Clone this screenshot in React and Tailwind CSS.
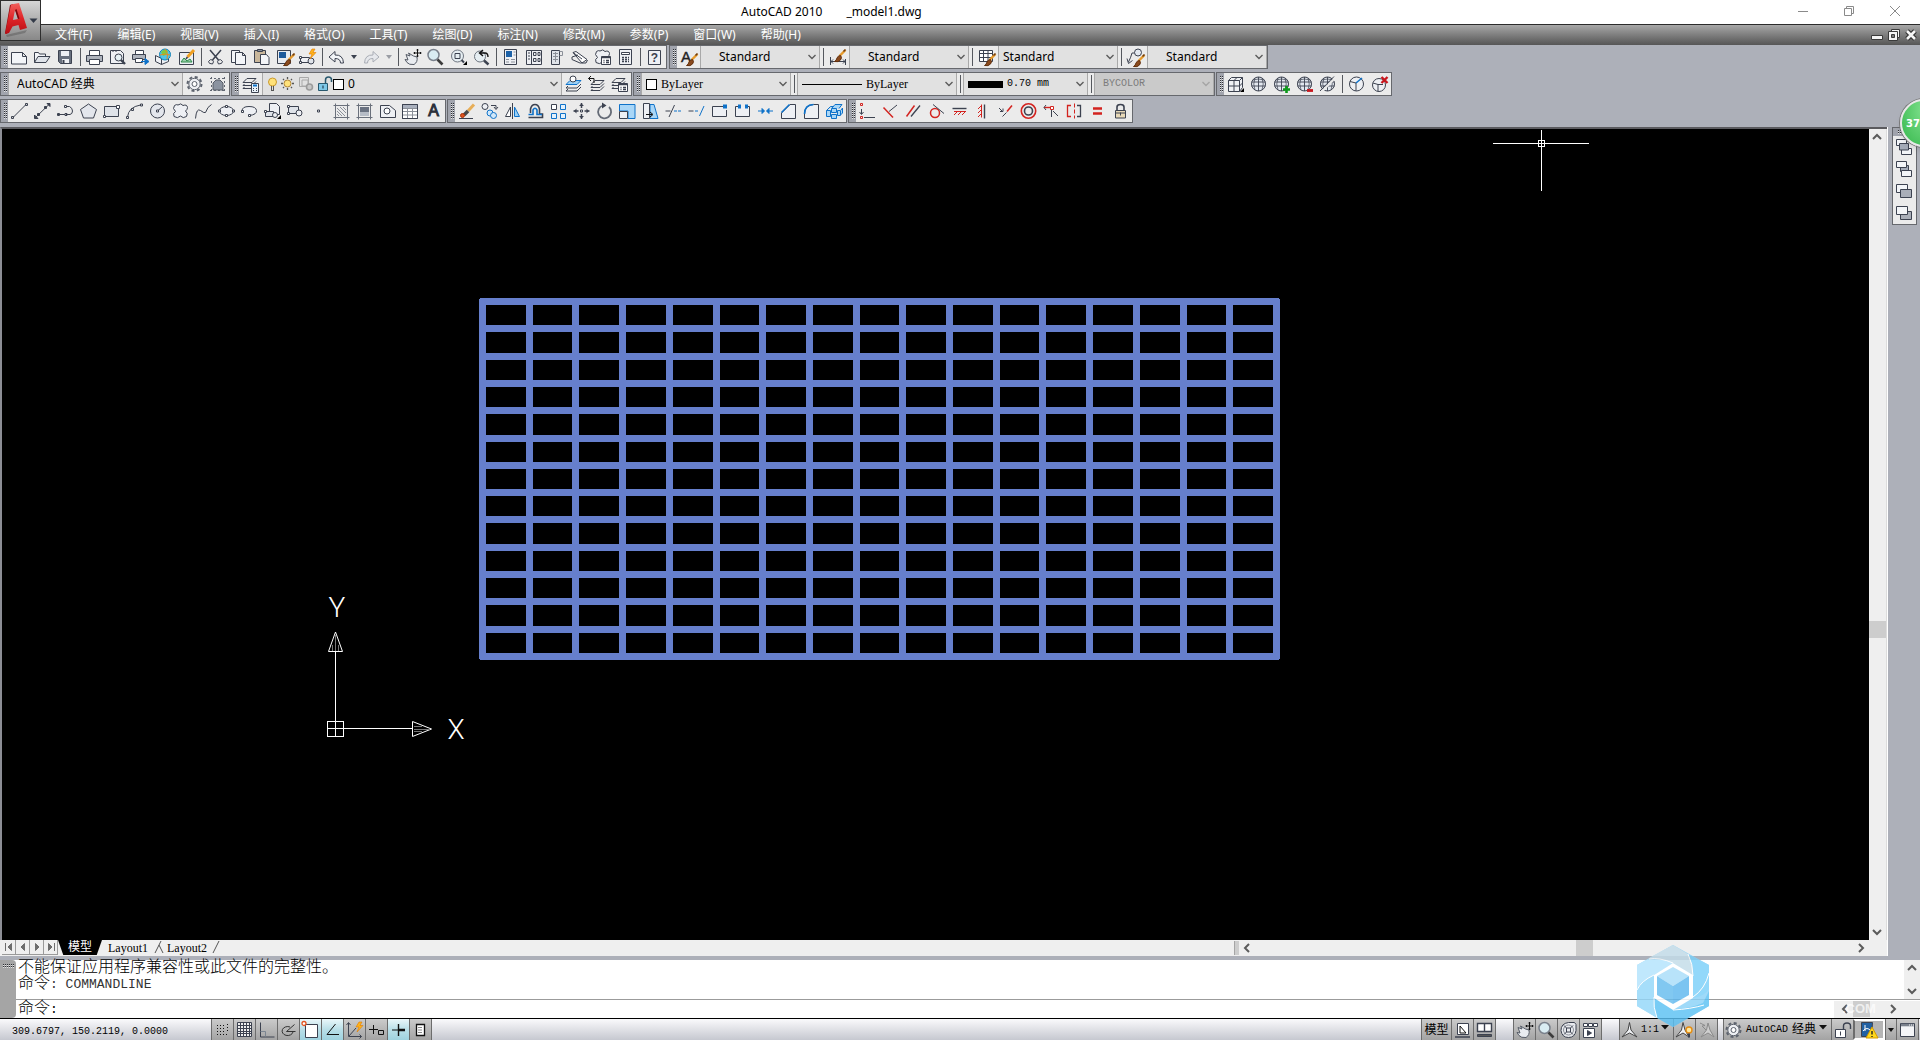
import React from "react";

const K = "#3c4250";
const B = "#0f72c9";
const R = "#d3231f";
const G = "#8b9099";

const globe = (
  <>
    <circle cx="9.500" cy="9" r="7" fill="#e3e8ef" />
    <path d="M2.500 7h14M2.500 11h14M9.500 2v14" strokeWidth=".9" />
    <path d="M6 3q-2.500 6 0 12M13 3q2.500 6 0 12M4 5q5.500-2 11 0" strokeWidth=".7" />
  </>
);
const sheets = (
  <path d="M2 7.500l4-4h9l-4 4zM2 10.500l1.500-1.500M15 6.500l-4 4H2M15 9.500l-4 4H2l1.500-1.500" fill="none" />
);
const brush = (
  <>
    <path d="M17.500 4l-6 6" stroke="#e69a2c" strokeWidth="2.400" />
    <path d="M17.500 3.500l-2 2" stroke="#6b3a14" strokeWidth="1.500" />
    <path d="M12.500 9.500q2 2 0 4.500q-2 2.500-6 1.500q2-1 2.500-3.500q1-2.500 3.500-2.500z" fill="#8a4a1e" stroke="#63300d" />
  </>
);
const corner = <path d="M18 13v4h-4z" fill="#000" stroke="none" />;
const hand = (
  <path d="M3 6.500l4 1.500-1.500-3 5 3 3.500 1q1 5-3 7.500-5 .5-7-2l-2-3 3 .5z" fill="#e9ecf0" stroke="#555b66" />
);
const moveCross = (
  <path d="M14.500 1v8M10.500 5h8M13.500 2h2M13.500 8h2M11.500 4v2M17.500 4v2" stroke="#111" />
);
const lens = (
  <>
    <circle cx="7.500" cy="7" r="5.500" fill="#d9ecf2" stroke="#7a818c" strokeWidth="1.500" />
    <path d="M11.500 11.500l5 5" stroke="#3c3c3c" strokeWidth="2.600" />
  </>
);
const cloud = (
  <path d="M7 3q3-2.500 5 .5q4-1.500 4.500 2q0 2-2 3.500q3 2.500 1 5.500q-3.500 2.500-6-.5q-3 3-6.500 .5q-1.500-3.500 1.500-5q-3.500-3-1-6q2-1.500 3.500-.5z" fill="#eef0f4" />
);
const bolt = <path d="M14 1l-3 5h3l-2 5 6-6.500h-3l2-3.500z" fill="#ffb31a" stroke="#e07b00" strokeWidth=".6" />;
const page = <path d="M3.500 1.500h12v15h-12z" fill="#eef0f4" />;

const art = {
  new: <path d="M1.500 4.500h11l4 4v7.500h-15zM12.500 4.500v4h4" fill="#f3f5f8" />,
  open: (
    <>
      <path d="M1.500 14.500v-10h4l1 1.500h6v3" fill="#f3f5f8" />
      <path d="M1.500 14.500l3.500-6h12l-4 6z" fill="#dfe3e9" />
    </>
  ),
  save: (
    <>
      <path d="M2.500 2.500h13v13h-11l-2-2z" fill="#68707e" />
      <path d="M5 3h8v5H5zM6 11h7v4H6z" fill="#eef0f4" stroke="none" />
      <path d="M7.500 12v3" stroke={K} strokeWidth="2" />
    </>
  ),
  print: (
    <>
      <path d="M4.500 7V2.500h10V7" fill="#fff" />
      <path d="M1.500 7.500h16v6h-16z" fill="#aeb3bc" />
      <path d="M4.500 11.500h10v5h-10z" fill="#fff" />
    </>
  ),
  preview: (
    <>
      <path d="M2.500 2.500h10l3 3v10h-13zM5 2v2M8 2v2" fill="#eef0f4" />
      <circle cx="10.500" cy="9.500" r="3.500" fill="#e6f1f5" />
      <path d="M13 12l4 4" strokeWidth="2.400" />
    </>
  ),
  publish: (
    <>
      <path d="M4.500 6V2.500h8V6" fill="#fff" />
      <path d="M1.500 6.500h13v5h-13z" fill="#aeb3bc" />
      <path d="M4.500 10.500h7v4h-7z" fill="#fff" />
      <path d="M10 13.500h4M14 10.500l4 3-4 3z" fill={B} stroke={B} />
    </>
  ),
  dwf: (
    <>
      <path d="M1.500 7.500l6 3v6l-6-3zM7.500 10.500l7-3v6l-7 3" fill="#eef0f4" />
      <circle cx="11" cy="6.500" r="5.500" fill="#4fc3e8" stroke="#1583b8" />
      <path d="M7 4q3-4 7-1l-2 4-3 1z" fill="#7cc943" stroke="none" />
      <path d="M11 1q4 4 2 10M6 7q5-2 10 0" stroke="#e68a1c" />
    </>
  ),
  markup: (
    <>
      <path d="M2.500 4.500h14v12h-14z" fill="#eef0f4" />
      <path d="M4 14l3-4 3 3 3-2 2 3z" fill="#9fd0ae" stroke="#2c8c4a" />
      <path d="M17 2l-6.500 7" stroke="#f0a022" strokeWidth="3" />
      <path d="M10.500 9l-1.500 2" stroke={K} strokeWidth="1.500" />
    </>
  ),
  cut: (
    <>
      <path d="M4 2l8.500 10M15 2L6.500 12" strokeWidth="1.500" />
      <path d="M2.500 13.500q2-3 4-1.500t0 4q-4 0-4-2.500zM16.500 13.500q-2-3-4-1.500t0 4q4 0 4-2.500z" />
    </>
  ),
  copyclip: (
    <>
      <path d="M2.500 2.500h8v12h-8z" fill="#f3f5f8" />
      <path d="M6.500 4.500h7l3 3v9h-10zM13.500 4.500v3h3" fill="#f3f5f8" />
    </>
  ),
  paste: (
    <>
      <path d="M2.500 2.500h11v12h-11z" fill="#c9b79b" />
      <path d="M5.500 1.500h5v2h-5z" fill="#8b9099" />
      <path d="M8.500 6.500h6l2.500 3v7h-8.500z" fill="#f3f5f8" />
    </>
  ),
  match: (
    <>
      <path d="M2.500 2.500h13v13h-13z" fill="#e8ebf0" />
      <path d="M4 4h7v6H4z" fill="#1d5a9c" stroke="none" />
      <g transform="translate(2 2)">{brush}</g>
    </>
  ),
  blockedit: (
    <>
      <path d="M2.500 9.500h9v5h-9z" fill="#eef0f4" />
      <circle cx="13" cy="13" r="3" fill="#dfe3e9" />
      <path d="M1.500 8.500h2v2h-2zM1.500 13.500h2v2h-2z" fill="#fff" />
      {bolt}
    </>
  ),
  undo: <path d="M2 9l6-5.500v3.500q8-.5 8.500 8h-3q0-4.500-5.500-4.500v3.500z" fill="#f3f5f8" />,
  redo: <path d="M17 9l-6-5.500v3.500q-8-.5-8.500 8h3q0-4.500 5.500-4.500v3.500z" fill="#e6e8ec" stroke="#a9adb5" />,
  pan: <>{hand}{moveCross}</>,
  zoomrt: lens,
  zoomwin: (
    <>
      <circle cx="8.500" cy="8" r="6" fill="#e6eef2" stroke="#6d747f" />
      <path d="M6 5.500h5v5H6z" />
      <path d="M12.500 12l2.500 2.500" strokeWidth="2" />
      {corner}
    </>
  ),
  zoomprev: (
    <>
      <circle cx="8" cy="8.500" r="5.500" fill="#e6eef2" stroke="#6d747f" />
      <path d="M12 12.500l4.500 4" strokeWidth="2.400" />
      <path d="M8 5h5q3 0 3 4M11 2L7.500 5l3.500 3" stroke="#111" strokeWidth="1.400" />
    </>
  ),
  props: (
    <>
      {page}
      <path d="M5 3h6v6H5z" fill="#1d62a8" stroke="none" />
      <path d="M12.500 4h2M12.500 7h2M5 11.500h3M10 11.500h4M5 14h3M10 14h4" stroke={G} />
    </>
  ),
  dcenter: (
    <>
      <path d="M2.500 2.500h15v14h-15zM7.500 2.500v14" fill="#eef0f4" />
      <path d="M9.500 4.500h2.500v3H9.500zM14 4.500h2v3h-2zM9.500 10.500h2.500v3H9.500zM14 10.500h2v3h-2zM4 5h2M4 8h2M4 11h2" />
    </>
  ),
  palettes: (
    <>
      <path d="M4.500 2.500h8v14h-8z" fill="#dfe3e9" />
      <path d="M12.500 3.500h3v4h-3M6 5.500h5M6 8.500h5M6 11.500h5M8.500 4v10" stroke={G} />
    </>
  ),
  sheetset: (
    <>
      <path d="M3 4.500l3-1 11 8-5 3.500z" fill="#fff" />
      <path d="M3 4.500l9 6.500M2 9l6-2M2 11.500l8 3.500h6l1.500-3M2 9v2.500" />
    </>
  ),
  markupset: (
    <>
      {cloud}
      <path d="M8.500 8.500h9v8h-9z" fill="#fff" />
      <path d="M8.500 9.500h9M10.500 12.500h1M13 12.500h3M10.500 14.500h1M13 14.500h3" strokeWidth="1.300" />
    </>
  ),
  calc: (
    <>
      {page}
      <path d="M5.500 4.500h8v2h-8z" fill="#fff" />
      <path d="M6 9.500h7M6 11.500h7M6 13.500h7" strokeDasharray="2 1" strokeWidth="1.300" />
    </>
  ),
  help: (
    <>
      <path d="M3.500 2.500h12v14h-12z" fill="#eef0f4" />
      <text x="9.500" y="14" textAnchor="middle" fontSize="12" fontWeight="700" fontFamily="Liberation Sans, sans-serif" fill={K} stroke="none">?</text>
    </>
  ),
  textstyle: (
    <>
      <text x="7" y="14" textAnchor="middle" fontSize="15" fontFamily="Liberation Sans, sans-serif" fill="#222" stroke="#222" strokeWidth=".4">A</text>
      <g transform="translate(1 2)">{brush}</g>
    </>
  ),
  dimstyle: (
    <>
      <path d="M2.500 9v8M17.500 11v6M3 13.500h14M5 11.500l-2 2 2 2M15 11.500l2 2-2 2" />
      <g transform="translate(0 -2)">{brush}</g>
    </>
  ),
  tablestyle: (
    <>
      <path d="M2.500 2.500h13v11h-13zM2.500 5.500h13M2.500 9.500h13M6.500 2.500v11M11 2.500v11" fill="#fff" />
      <g transform="translate(1 2)">{brush}</g>
    </>
  ),
  leaderstyle: (
    <>
      <circle cx="12" cy="4.500" r="3.500" fill="#e3e8ef" />
      <path d="M8.500 5H6q-1 4-3.500 9M1 10.500l1.500 5 4-3" />
      <g transform="translate(1 3)">{brush}</g>
    </>
  ),
  gear: (
    <>
      <circle cx="9.500" cy="9" r="7" strokeWidth="2" strokeDasharray="3 2.500" stroke="#5d636e" />
      <circle cx="9.500" cy="9" r="5.700" fill="#eef0f4" stroke="#5d636e" />
      <circle cx="9.500" cy="9" r="2.500" fill="#fff" stroke="#5d636e" />
    </>
  ),
  wssave: (
    <>
      <path d="M5 8l3-3h4l3 3v7H5z" fill="#8b93a0" stroke="#565c67" />
      <path d="M2 3.500h15M3.500 2v15M16.500 2v15M2 15.500h15" strokeDasharray="2 2" stroke="#5f6570" />
    </>
  ),
  layers: (
    <>
      {sheets}
      <path d="M10.500 8.500h7v9h-7z" fill="#eaf3fb" />
      <path d="M12 10.500h4" stroke={B} strokeWidth="2" />
      <path d="M12 13.500h1M15 13.500h1M12 15.500h1M15 15.500h1" />
    </>
  ),
  laycur: (
    <>
      <path d="M2 9.500l4-4h11l-4 4z" fill="#9bd0f5" stroke={B} />
      <circle cx="9" cy="4" r="3" fill="#fff" />
      <path d="M17 9l-4 4H2l2-2M17 12l-4 4H2l2-2" />
    </>
  ),
  layprev: (
    <>
      <g transform="translate(2 2)">{sheets}</g>
      <path d="M7 8V3.500H1.500M4 1L1.500 3.500 4 6" stroke="#111" />
    </>
  ),
  laystate: (
    <>
      {sheets}
      <path d="M8.500 8.500h9v8h-9z" fill="#fff" />
      <path d="M8.500 9.500h9M10.500 12.500h1M13 12.500h3M10.500 14.500h1M13 14.500h3" strokeWidth="1.300" />
    </>
  ),
  vsbox: (
    <>
      <path d="M2.500 5.500h11v11h-11zM2.500 11h11M8 5.500v11M2.500 5.500l3-3h11v10l-3 4M13.500 5.500l3-3M13.500 11l3-3M8 5.500l3-3" fill="#eef0f4" />
      {corner}
    </>
  ),
  globe,
  globeadd: <>{globe}<path d="M14.500 11v7M11 14.500h7" stroke="#0e9a1c" strokeWidth="2.600" /></>,
  globedel: <>{globe}<path d="M12 15.500h6" stroke="#c8171e" strokeWidth="2.800" /></>,
  globecut: <>{globe}<path d="M3.500 17L17.500 2.500" stroke="#ebebeb" strokeWidth="2" /><path d="M2 16L16 1.500" /></>,
  orb: (
    <>
      <circle cx="9.500" cy="9" r="7" fill="#eef0f4" />
      <path d="M3 6.500l6 1.500v8" />
      <path d="M9 8l6-5" stroke={B} strokeWidth="1.600" />
    </>
  ),
  orbx: (
    <>
      <circle cx="9" cy="10" r="6.500" fill="#eef0f4" />
      <path d="M3 8l5 1.500v7M8 9.500l5 0" />
      <path d="M11.500 2l6 6M17.500 2l-6 6" stroke="#c8171e" strokeWidth="2.400" />
    </>
  ),
  line: <path d="M3 15.500L16 2.500M1.500 14.500h2v2h-2zM15.500 1.500h2v2h-2z" fill="#fff" />,
  xline: <path d="M2 16L17 1.500M1.500 13v3.500h3.500zM14 1.500h3v3zM4.500 11.500h2v2h-2zM11.500 4.500h2v2h-2z" fill={K} />,
  pline: (
    <path d="M2 12.500h7M10 12.500h4q2.500-.5 2.500-3.500t-3-4.500h-3M1.500 11.500h2v2h-2zM9 11.500h2v2H9zM8.500 3.500h2v2h-2z" fill="none" />
  ),
  polygon: <path d="M9.500 2l8 5.500-3 8.500h-10l-3-8.500z" fill="#e3e6ec" />,
  rect: (
    <>
      <path d="M2.500 4.500h14v10h-14z" fill="#dfe3e9" />
      <path d="M14.500 3.500h3v3h-3zM1.500 13.500h2v2h-2z" fill="#fff" />
    </>
  ),
  arc: <path d="M2.500 15q1-10 13-12M1.500 14.500h2v2h-2zM6.500 6.500h2v2h-2zM15.500 2h2v2h-2z" fill="none" />,
  circle: (
    <>
      <circle cx="9.500" cy="9" r="7" fill="#e3e6ec" />
      <path d="M10 8.500L14 5M8.500 8h2v2h-2z" fill="#fff" />
    </>
  ),
  revcloud: cloud,
  spline: <path d="M1.500 16.500q1-11 5-8t5 2q2-6 6-8" />,
  ellipse: (
    <>
      <ellipse cx="9.500" cy="9" rx="7" ry="4.500" fill="#eef0f4" />
      <path d="M1.500 8h2v2h-2zM15.500 8h2v2h-2zM8.500 3.500h2v2h-2zM8.500 12.500h2v2h-2z" fill="#fff" />
    </>
  ),
  earc: (
    <>
      <path d="M2 9q0-4.500 7-4.500t7.500 4-7 5" fill="#eef0f4" />
      <path d="M1.500 8.500h2v2h-2zM8.500 12.500h2v2h-2z" fill="#fff" />
    </>
  ),
  insert: (
    <>
      <path d="M6.500 1.500h7l3 3v8h-10z" fill="#eef0f4" />
      <path d="M2.500 9.500h8v5h-8z" fill="#dfe3e9" />
      <circle cx="12" cy="13" r="2.500" fill="#eef0f4" />
      <path d="M1.500 8.500h2v2h-2z" fill="#fff" />
      {corner}
    </>
  ),
  mkblock: (
    <>
      <path d="M2.500 4.500h10v7h-10z" fill="#dfe3e9" />
      <circle cx="13" cy="11" r="3" fill="#eef0f4" />
      <path d="M1.500 3.500h2v2h-2zM1.500 10.500h2v2h-2z" fill="#fff" />
    </>
  ),
  point: <path d="M8.500 8h2v2h-2z" fill="#fff" />,
  hatch: (
    <>
      <path d="M1.500 3.500h16M3.500 1.500v16M15.500 1.500v16M1.500 15.500h16" stroke="#6a707b" />
      <path d="M5 6l8 8M8 5l6 6M5 9l5 5M11 5l3 3M5 12l2 2" stroke={G} />
    </>
  ),
  gradient: (
    <>
      <path d="M5 5h9v9H5z" fill="#6a7281" stroke="none" />
      <path d="M5 10h9v4H5z" fill="#b6bcc6" stroke="none" />
      <path d="M1.500 3.500h16M3.500 1.500v16M15.500 1.500v16M1.500 15.500h16" stroke="#6a707b" />
    </>
  ),
  region: (
    <>
      <path d="M2.500 3.500h9l6 5v7h-15z" fill="#eef0f4" />
      <circle cx="9" cy="9" r="3" fill="#fff" />
    </>
  ),
  table: (
    <>
      <path d="M1.500 2.500h15v14h-15z" fill="#fff" />
      <path d="M2 3h14v3H2z" fill="#a9b0bd" stroke="none" />
      <path d="M1.500 6.500h15M1.500 9.500h15M1.500 13h15M6.500 6v10M11.500 6v10" stroke={G} />
      <path d="M1.500 2.500h15v14h-15z" />
    </>
  ),
  mtext: (
    <text x="9.500" y="14" textAnchor="middle" fontSize="16" fontFamily="Liberation Sans, sans-serif" fill="#2b303b" stroke="#2b303b" strokeWidth="1">A</text>
  ),
  erase: (
    <>
      <path d="M17 2.500l-6 6.500" stroke="#e7ae58" strokeWidth="3" />
      <path d="M11 9l-4 4" stroke="#4a4a4a" strokeWidth="3.500" />
      <circle cx="5.500" cy="13.500" r="2" fill="#e0531d" stroke="#a8330a" />
      <path d="M2 16.500h14" />
    </>
  ),
  copy: (
    <>
      <circle cx="5" cy="4.500" r="3" fill="#eef0f4" />
      <circle cx="10" cy="11" r="3" fill="#d2e8f9" stroke={B} />
      <circle cx="13.500" cy="13.500" r="3" fill="#d2e8f9" stroke={B} />
      <path d="M11 3.500h5v3M14 5l2 2.500L18 5" />
    </>
  ),
  mirror: (
    <>
      <path d="M7.500 5v9.500h-5z" fill="#fff" />
      <path d="M9.500 1v16" />
      <path d="M11.500 5v9.500h5z" fill="#9bd0f5" stroke={B} />
    </>
  ),
  offset: (
    <>
      <path d="M2.500 15.500h14v-3.500h-3V7q-1-4.500-4.500-4.500T4.500 7v4" stroke={K} strokeWidth="1.600" />
      <path d="M2.500 12.500H7V8q2-3.500 4 0v4.500h5" stroke={B} strokeWidth="1.600" />
    </>
  ),
  array: (
    <>
      <path d="M2.500 2.500h5v5h-5z" fill="#fff" />
      <path d="M11.500 2.500h5v5h-5zM2.500 11.500h5v5h-5zM11.500 11.500h5v5h-5z" fill="#e3f1fc" stroke={B} />
    </>
  ),
  move: (
    <>
      <path d="M9.500 1v5M9.500 12v5M1.500 9h5M12.500 9h5" strokeWidth="1.500" />
      <path d="M7 4l2.500-2.500L12 4zM7 14l2.500 2.500L12 14zM4.500 6.500L2 9l2.500 2.500zM14.500 6.500L17 9l-2.500 2.500z" fill={K} stroke="none" />
      <path d="M8.500 8h2v2h-2z" fill="#fff" />
    </>
  ),
  rotate: (
    <>
      <path d="M8 3.500a6.500 6.500 0 1 0 6 1.500" strokeWidth="1.800" stroke="#656b76" />
      <path d="M7 .5l4.500 3L7 6.500z" fill={K} stroke="none" />
    </>
  ),
  scale: (
    <>
      <path d="M1.500 2.500h15.500v14H10V9H1.500z" fill="#a9d6f7" stroke={B} />
      <path d="M1.500 9.500h8v7h-8z" fill="#eef0f4" />
    </>
  ),
  stretch: (
    <>
      <path d="M9 2.500h4l4 14H9z" fill="#a9d6f7" stroke={B} />
      <path d="M2.500 1.500h6v15h-6z" fill="#eef0f4" />
      <path d="M5 12.500h6M9 10l3 2.500L9 15" stroke="#111" />
    </>
  ),
  trim: (
    <>
      <path d="M1.500 9h5M5 15L10.500 3" />
      <path d="M10 9h8" stroke={B} strokeDasharray="3 1" />
    </>
  ),
  extend: (
    <>
      <path d="M1.500 9h5" />
      <path d="M8 9h4" stroke={B} strokeDasharray="3 1" />
      <path d="M12.500 14L17 4" stroke={B} />
    </>
  ),
  breakpt: (
    <>
      <path d="M14 4.500H2.500v10h14V8" fill="#eef0f4" />
      <path d="M13 2.500h4v4h-4z" fill={B} stroke="none" />
    </>
  ),
  break: (
    <>
      <path d="M5 4.500H2.500v10h14v-10H14" fill="#eef0f4" />
      <path d="M5 2.500h3v4H5zM12 2.500h3v4h-3z" fill={B} stroke="none" />
    </>
  ),
  join: <path d="M2 9h6M17 9h-6M6 6.500L8.500 9 6 11.500zM13 6.500L10.500 9l2.500 2.500z" stroke={B} fill={B} />,
  chamfer: (
    <>
      <path d="M2.500 16.500V11L11 2.500h5.500v14z" fill="#eef0f4" />
      <path d="M2.500 10.500l8-8" stroke={B} strokeWidth="1.600" />
    </>
  ),
  fillet: (
    <>
      <path d="M2.500 16.500V12q0-9 9-9.500h5v14z" fill="#eef0f4" />
      <path d="M2.500 12q0-9 9-9.500" stroke={B} strokeWidth="1.600" />
    </>
  ),
  explode: (
    <path d="M1.500 8.500h4v6h-4zM6.500 6.500h5v4h-5zM6.500 12.500h5v4h-5zM12.500 8.500h3v5h-3zM1.500 8.500l4-4h3M7 6l3-3.500h7l-3 4M16 8l1.500-2v5l-2 2" fill="#a9d6f7" stroke={B} />
  ),
  coincident: (
    <>
      <path d="M3.500 7v5M1.500 10l2 2.500 2-2.500M6 15.500h11" />
      <path d="M2.500 1.500h2v2h-2zM2.500 14.500h2v2h-2z" stroke={R} />
    </>
  ),
  perp: (
    <>
      <path d="M8 9.500L16 3" />
      <path d="M2.500 5.500L12 15.500" stroke={R} strokeWidth="1.500" />
    </>
  ),
  parallel: (
    <>
      <path d="M2.500 14.500l8-11" stroke={R} strokeWidth="1.500" />
      <path d="M7 14.500l9-11" strokeWidth="1.300" />
    </>
  ),
  tangent: (
    <>
      <circle cx="8" cy="11" r="4.500" stroke={R} strokeWidth="1.500" />
      <path d="M6 2.500l11 9" />
    </>
  ),
  horiz: (
    <>
      <path d="M2.500 6.500h14" strokeWidth="1.400" />
      <path d="M4 9.500h12M7 10l-3 3M11 10l-3 3M15 10l-3 3" stroke={R} />
    </>
  ),
  vert: (
    <>
      <path d="M11.500 2.500v14" strokeWidth="1.400" />
      <path d="M8.500 2.500v13M8 4l-3 3M8 8l-3 3M8 12l-3 3" stroke={R} />
    </>
  ),
  collinear: (
    <>
      <path d="M3 6l4 4M4 9.500h3v-3M6.500 14.500l4-4" />
      <path d="M11 9.500l5-6" stroke={R} strokeWidth="1.500" />
    </>
  ),
  concentric: (
    <>
      <circle cx="9.500" cy="9" r="7.200" stroke={R} strokeWidth="1.600" />
      <circle cx="9.500" cy="9" r="4" strokeWidth="1.600" />
    </>
  ),
  smooth: (
    <>
      <path d="M2 5.500h6" stroke={R} strokeWidth="1.400" />
      <path d="M9.500 7v8M11 9l5 5M4 3l-2 2.500 2 2.500" />
      <path d="M8.500 4.500h3v3h-3z" stroke={R} fill="#fff" />
    </>
  ),
  symmetric: (
    <>
      <path d="M6 3.500H2.500v11H6" stroke={R} strokeWidth="1.300" />
      <path d="M9.500 1.500v15" stroke={R} strokeDasharray="4 2" />
      <path d="M12 3.500h3.500v11H12" strokeWidth="1.300" />
    </>
  ),
  equal: <path d="M5 6.500h9M5 11.500h9" stroke={R} strokeWidth="2.600" />,
  lock: (
    <>
      <path d="M6 8V5q0-2.500 3.500-2.500T13 5v3" strokeWidth="1.600" />
      <path d="M4.500 8.500h10v7.500h-10z" fill="#e8d9b8" />
      <path d="M5 11h9M9.500 10.500v3" />
    </>
  ),
  order1: <><path d="M1.500 1.500h10v6h-10zM6.500 10.500h10v6h-10z" fill="#f3f5f8" /><path d="M4.500 5.500h9v6.500h-9z" fill="#a4abb8" /></>,
  order2: <><path d="M5.500 5.500h8v6h-8z" fill="#a4abb8" /><path d="M1.500 1.500h10v6h-10zM6.500 10.500h10v6h-10z" fill="#f3f5f8" /></>,
  order3: <><path d="M1.500 2.500h11v8h-11z" fill="#f3f5f8" /><path d="M5.500 7.500h11v8h-11z" fill="#a9aeb8" /></>,
  order4: <><path d="M5.500 7.500h11v8h-11z" fill="#a9aeb8" /><path d="M1.500 2.500h11v8h-11z" fill="#f3f5f8" /></>,
  snap: <path d="M4 4.500h8M4 7.500h8M4 10.500h8M4 13.500h11M14.500 3v8" strokeDasharray="1 2" stroke="#111" />,
  grid: <path d="M2.500 1.500h14v14h-14zM2.500 4.500h14M2.500 7.500h14M2.500 10.500h14M2.500 12.500h14M5.500 1.500v14M8.500 1.500v14M11.500 1.500v14M14.500 1.500v14" fill="#eee" />,
  ortho: <><path d="M3.500 1.500v14.500h14" /><path d="M3.500 10.500h5v5" stroke="#7b8591" /></>,
  polar: <path d="M14 11a5.500 4.500 0 1 1-3-5M15.500 3.500L7.500 10.500h9" stroke="#333" />,
  osnap: <><path d="M4.500 3.500h12v13h-12z" fill="#fff" /><circle cx="3" cy="2.500" r="2" fill="#fff" stroke="#e35420" strokeWidth="1.300" /></>,
  otrack: <path d="M12.500 3L4 13.500h12" stroke="#111" />,
  ducs: <><path d="M3.500 2v13.500h13M1.500 4l2-2.500 2 2.500M14.500 13.500l2 2-2 2M4 15l7-8" />{bolt}</>,
  dyn: <path d="M6.500 4v9M2 8.500h9M11.500 9.500h5v4h-5z" stroke="#111" />,
  lwt: <><path d="M9.500 3v12" stroke="#111" strokeWidth="1.400" /><path d="M3 9h6" stroke="#111" /><path d="M9 9h7" stroke="#111" strokeWidth="2.500" /></>,
  qp: <><path d="M5.500 3.500h8v11h-8z" fill="#fff" stroke="#111" strokeWidth="1.300" /><path d="M7.500 6.500h4M7.500 9h4M7.500 11.500h4" stroke="#111" strokeDasharray="1 1" /></>,
  layoutA: <><path d="M4.500 2.500h11v11h-11z" fill="#fff" /><path d="M7 5v7h6z" stroke="#111" /><path d="M2 16h15" strokeWidth="1.500" /></>,
  layoutB: <><path d="M2.500 2.500h14v8h-14zM9.500 2.500v8" fill="#fff" strokeWidth="1.400" /><path d="M2.500 13.500h14v2h-14z" fill="#555" /></>,
  steer: (
    <>
      <path d="M9.500 1.500h6l1.500 2v6q-1 7-7.500 7t-7.500-7q0-7 7.500-8z" fill="#e8eaee" />
      <circle cx="9.500" cy="9" r="5" stroke={G} />
      <path d="M7.500 7h4v4h-4zM5 4.500l2.500 2.500M14 4.500L11.500 7M5 13.500L7.500 11M14 13.500L11.500 11" />
    </>
  ),
  motion: <><path d="M2.500 2.500h4v3h-4zM7.500 2.500h4v3h-4zM12.500 2.500h4v3h-4z" fill="#fff" /><path d="M2.500 7.500h11v9h-11z" fill="#fff" /><path d="M6.500 9.500v5l4-2.500z" fill={K} /></>,
  anno: <path d="M9.500 1.500L8 9l-6 7 7.500-4 7.500 4-6-7z" fill="#f0f2f5" stroke="#444" />,
  annovis: <><path d="M8 1.500L6.500 9 1 16l7-4 6 4-4-7z" fill="#f0f2f5" stroke="#444" /><circle cx="14" cy="9" r="3" fill="#ffe9a0" stroke="#e58c12" strokeWidth="1.400" /><path d="M14 12.500v4" strokeWidth="2" /></>,
  annoauto: <path d="M11 2L9.500 9 4 16l7-4 6 4-4-7zM3 2l5 2.500-3 .5 4 4" fill="#cfcfcf" stroke="#8a8a8a" />,
  unlock: <><path d="M10.500 8V5q0-3 3.500-3t3.500 3v3" strokeWidth="1.400" /><path d="M2.500 8.500h10v8h-10z" fill="#fff" /><path d="M7.500 10.500v4" /></>,
  tray: <><path d="M1.500 1.500h11l-1 14h-10z" fill="#2261a3" /><path d="M3 10q4-5 8 0M5 4v6" stroke="#fff" /><path d="M12 6l6 11H6z" fill="#ffd81c" stroke="#d59a00" /><path d="M12 10v3.500M12 15v1" stroke="#222" strokeWidth="1.400" /></>,
  clean: <><path d="M2.500 2.500h14v13h-14z" fill="#f4f5f7" /><path d="M3 4h13" strokeWidth="2.600" stroke="#7a818c" /><path d="M11 4h1M13 4h1M15 4h1" stroke="#fff" /></>,
  bulb: <><circle cx="9.500" cy="7" r="4" fill="#ffe27a" stroke="#c99a2e" /><path d="M8.500 11v4M10.500 11v4M8 15.500h3" stroke="#555" /></>,
  sun: <><circle cx="9.500" cy="8.500" r="3.500" fill="#ffe27a" stroke="#b0863a" /><path d="M9.500 2v2M9.500 13v2M3 8.500h2M14 8.500h2M5 4l1 1M13 12l1 1M14 4l-1 1M5 13l1-1" stroke="#555" strokeWidth="1.300" /></>,
  vpfreeze: <><path d="M2.500 2.500h9v9h-9zM5 5h6v6H5z" stroke="#a9a9a9" /><circle cx="12.500" cy="12" r="3" fill="#c8c8c8" stroke="#9c9c9c" strokeWidth="1.600" /></>,
  layunlock: <><path d="M10.500 8V5q0-3 3-3t3 3v2" strokeWidth="1.500" stroke="#28586e" /><path d="M3.500 8.500h9v7h-9z" fill="#7ec8e8" stroke="#28586e" /><path d="M8 10.500v3" stroke="#123" /></>,
};

const Art = ({ name }) => (
  <svg width="19" height="18" viewBox="0 0 19 18" fill="none" stroke={K} className="shrink-0 overflow-visible" aria-hidden="true">
    {art[name]}
  </svg>
);

const Btn = ({ name }) => (
  <button type="button" aria-label={name} className="flex h-[22px] w-[23px] shrink-0 items-center justify-center hover:bg-sky-100">
    <Art name={name} />
  </button>
);

const Sep = () => (
  <div className="flex w-[6px] shrink-0 justify-center py-0.5">
    <div className="w-px bg-[#55585e]" />
  </div>
);

const Grip = () => (
  <div className="flex w-[7px] shrink-0 items-center justify-center bg-[#a1a4ad]">
    <div className="h-4 w-1 bg-[conic-gradient(#2f3136_25%,#e4e4e4_0_50%,#0000_0)] bg-[size:2px_2px]" />
  </div>
);

const Bar = ({ label, children }) => (
  <div role="toolbar" aria-label={label} className="flex h-6 shrink-0 border border-[#66686d] bg-[#ebebeb]">
    <Grip />
    {children}
  </div>
);

const Items = ({ list }) =>
  list.split(" ").map((n, i) => (n === "|" ? <Sep key={i} /> : <Btn key={i} name={n} />));

const Chevron = ({ className = "text-[#5c5c5c]" }) => (
  <svg width="10" height="6" viewBox="0 0 10 6" fill="none" stroke="currentColor" strokeWidth="1.400" className={"shrink-0 " + className} aria-hidden="true">
    <path d="M1.500 1l3.500 3.500L8.500 1" />
  </svg>
);

const Caret = ({ label, className = "text-[#3c4250]" }) => (
  <button type="button" aria-label={label} className={"flex w-3 shrink-0 items-center justify-center " + className}>
    <svg width="6" height="4" viewBox="0 0 6 4" fill="currentColor" aria-hidden="true"><path d="M0 0h6L3 4z" /></svg>
  </button>
);

const UI = "font-['Noto_Sans','Noto_Sans_CJK_SC',sans-serif] text-[12px]";
const SERIF = "font-['Liberation_Serif','Noto_Sans_CJK_SC',serif] text-[12px]";
const MONO = "font-['Liberation_Mono','Noto_Sans_CJK_SC',monospace] text-[10px]";

const Combo = ({ label, value, width, pad = "pl-4", font = UI, disabled = false, lead }) => (
  <div className={"flex shrink-0 items-center border-x border-[#a9a9a9] pr-0.5 " + (disabled ? "bg-[#cacaca] " : "bg-[#e1e1e1] ") + width}>
    {lead}
    <select
      aria-label={label}
      disabled={disabled}
      className={"h-[22px] min-w-0 flex-1 appearance-none bg-transparent leading-[20px] outline-none " + font + " " + pad + (disabled ? " text-[#7c7c7c]" : " text-black")}
    >
      <option>{value}</option>
    </select>
    <Chevron className={disabled ? "text-[#a5a5a5]" : "text-[#5c5c5c]"} />
  </div>
);

const menus = ["文件(F)", "编辑(E)", "视图(V)", "插入(I)", "格式(O)", "工具(T)", "绘图(D)", "标注(N)", "修改(M)", "参数(P)", "窗口(W)", "帮助(H)"];

const WinBtn = ({ label, children }) => (
  <button type="button" aria-label={label} className="flex h-[22px] w-[46px] items-center justify-center">
    <svg width="12" height="12" viewBox="0 0 12 12" fill="none" stroke="#8a8a8a" aria-hidden="true">{children}</svg>
  </button>
);

const DocBtn = ({ label, children }) => (
  <button type="button" aria-label={label} className="flex w-[17px] items-center justify-center">
    <svg width="14" height="14" viewBox="0 0 14 14" fill="none" aria-hidden="true">{children}</svg>
  </button>
);

const Header = () => (
  <header className="relative">
    <div className="flex h-6 justify-between bg-white">
      <h1 className={"ml-[38.6%] flex items-center gap-6 whitespace-pre text-black " + UI}>
        <span>AutoCAD 2010</span>
        <span>_model1.dwg</span>
      </h1>
      <div className="flex pr-0.5">
        <WinBtn label="Minimize"><path d="M1 6.500h10" /></WinBtn>
        <WinBtn label="Restore"><path d="M1.500 3.500h7v7h-7zM3.500 3.500v-2h7v7h-2" /></WinBtn>
        <WinBtn label="Close"><path d="M1 1l10 10M11 1L1 11" /></WinBtn>
      </div>
    </div>
    <div className="flex h-[21px] justify-between border-t border-[#2b2b2b] bg-linear-to-b from-[#a8a8a8] to-[#565656]">
      <nav className={"flex gap-[25px] pl-[55px] text-white " + UI}>
        {menus.map((m) => (
          <button type="button" key={m} className="leading-5">{m}</button>
        ))}
      </nav>
      <div className="flex pr-px">
        <DocBtn label="Minimize drawing"><path d="M1.500 7.500h11v4h-11z" fill="#f4f4f4" stroke="#3a3a3a" /></DocBtn>
        <DocBtn label="Restore drawing">
          <path d="M4.500 1.500h8v8h-8z" fill="#f4f4f4" stroke="#3a3a3a" />
          <path d="M1.500 3.500h9v9h-9z" fill="#f4f4f4" stroke="#3a3a3a" />
          <path d="M4.500 6.500h3v3h-3z" fill="#777" stroke="#3a3a3a" />
        </DocBtn>
        <DocBtn label="Close drawing">
          <path d="M3 3l8 8M11 3l-8 8" stroke="#333" strokeWidth="5" />
          <path d="M3 3l8 8M11 3l-8 8" stroke="#f6f6f6" strokeWidth="2.600" />
        </DocBtn>
      </div>
    </div>
    <button type="button" aria-label="Application menu" className="absolute top-0 left-0 flex size-[41px] items-center border border-[#2e2e2e] bg-linear-to-b from-[#d6d6d6] to-[#888888]">
      <svg width="39" height="39" viewBox="0 0 39 39" aria-hidden="true">
        <defs>
          <linearGradient id="red" x1="0" y1="0" x2="0" y2="1">
            <stop offset="0" stopColor="#f2605c" />
            <stop offset=".5" stopColor="#df2428" />
            <stop offset="1" stopColor="#b80d14" />
          </linearGradient>
        </defs>
        <path d="M5 34l21-5-2 3-18 4z" fill="#5a5a5a" opacity=".5" />
        <path d="M9 4l3-1-3 20-3 10-2-1z" fill="#8e0b10" />
        <path d="M10 3.500l8-1.500L26 27l-7 2-1.500-5-6 1.500L8 32l-4 1zM14 9l-2 10 5-1z" fill="url(#red)" fillRule="evenodd" />
        <path d="M14 9l3 9 1.500-.5L15.500 8z" fill="#7d080d" />
        <path d="M28.500 17.500h8l-4 4.500z" fill="#333a48" />
      </svg>
    </button>
  </header>
);

const Toolbars = () => (
  <div className="flex flex-col gap-[3px] pb-1">
    <div className="flex gap-0.5">
      <Bar label="标准">
        <Items list="new open save | print preview publish dwf markup | cut copyclip paste match blockedit |" />
        <Btn name="undo" /><Caret label="Undo list" />
        <Btn name="redo" /><Caret label="Redo list" className="text-[#9a9da4]" />
        <Items list="| pan zoomrt zoomwin zoomprev | props dcenter palettes sheetset markupset calc | help" />
      </Bar>
      <Bar label="样式">
        <Btn name="textstyle" />
        <Combo label="文字样式" value="Standard" width="w-[120px]" pad="pl-[18px]" />
        <Sep /><Btn name="dimstyle" />
        <Combo label="标注样式" value="Standard" width="w-[120px]" pad="pl-[18px]" />
        <Sep /><Btn name="tablestyle" />
        <Combo label="表格样式" value="Standard" width="w-[120px]" pad="pl-1" />
        <Sep /><Btn name="leaderstyle" />
        <Combo label="多重引线样式" value="Standard" width="w-[120px]" pad="pl-[18px]" />
      </Bar>
    </div>
    <div className="flex gap-px">
      <Bar label="工作空间">
        <Combo label="工作空间" value="AutoCAD 经典" width="w-[175px]" pad="pl-2" />
        <Items list="gear wssave" />
      </Bar>
      <Bar label="图层">
        <Btn name="layers" />
        <Combo
          label="图层"
          value="0"
          width="w-[300px]"
          pad="pl-1"
          lead={
            <div className="flex items-center">
              <Art name="bulb" />
              <div className="-ml-1"><Art name="sun" /></div>
              <Art name="vpfreeze" />
              <div className="-ml-px"><Art name="layunlock" /></div>
              <div className="-ml-px size-[11px] border border-black bg-white" />
            </div>
          }
        />
        <Items list="laycur layprev laystate" />
      </Bar>
      <Bar label="特性">
        <Combo label="颜色" value="ByLayer" width="w-[150px]" pad="pl-1" font={SERIF} lead={<div className="ml-1 size-[11px] border border-black bg-white" />} />
        <Sep />
        <Combo label="线型" value="ByLayer" width="w-[160px]" pad="pl-1" font={SERIF} lead={<div className="ml-1 h-px w-[60px] bg-black" />} />
        <Sep />
        <Combo label="线宽" value="0.70 mm" width="w-[125px]" pad="pl-1" font={MONO} lead={<div className="ml-1 h-[7px] w-[35px] bg-black" />} />
        <Sep />
        <Combo label="打印样式" value="BYCOLOR" width="w-[120px]" pad="pl-2" font={MONO} disabled />
      </Bar>
      <Bar label="三维导航">
        <Items list="vsbox globe globeadd globedel globecut | orb orbx" />
      </Bar>
    </div>
    <div className="flex gap-px">
      <Bar label="绘图">
        <Items list="line xline pline polygon rect arc circle revcloud spline ellipse earc insert mkblock point hatch gradient region table mtext" />
      </Bar>
      <Bar label="修改">
        <Items list="erase copy mirror offset array move rotate scale stretch trim extend breakpt break join chamfer fillet explode" />
      </Bar>
      <Bar label="几何约束">
        <Items list="coincident perp parallel tangent horiz vert collinear concentric smooth symmetric equal lock" />
      </Bar>
    </div>
  </div>
);

const COLS = 17;
const ROWS = 13;
const grid = { x: 477, y: 169, w: 794, h: 355, t: 7 };

const Drawing = () => (
  <svg className="absolute inset-0 h-full w-full" fill="none" stroke="#fff" shapeRendering="crispEdges" role="img" aria-label="model space">
    <g fill="#667fcc" stroke="none">
      {Array.from({ length: COLS + 1 }, (_, i) => (
        <rect key={"c" + i} x={grid.x + Math.round((i * grid.w) / COLS)} y={grid.y + 1} width={grid.t} height={grid.h + grid.t - 2} />
      ))}
      {Array.from({ length: ROWS + 1 }, (_, i) => (
        <rect key={"r" + i} x={grid.x + 1} y={grid.y + Math.round((i * grid.h) / ROWS)} width={grid.w + grid.t - 2} height={grid.t} />
      ))}
    </g>
    <path d="M325.500 592.500h16v15h-16zM333.500 522v86M325 599.500h85" />
    <path d="M333.500 503l-7 19.500h14zM410.500 592.500v15l19-7.500z" shapeRendering="auto" />
    <path d="M333.500 506v16M330.500 516v6M336.500 516v6M412 597.500h8M412 600h16M412 602.500h8" stroke="#777" />
    <g fill="#fff" stroke="none" fontFamily="Roboto, sans-serif" fontWeight="300" fontSize="28" textAnchor="middle" shapeRendering="auto">
      <text x="335" y="488">Y</text>
      <text x="454" y="610">X</text>
    </g>
    <path d="M1491 14.500h45M1543 14.500h44M1539.500 1v10M1539.500 18v44M1536.500 11.500h6v6h-6zM1539.500 12v5M1537 14.500h5" />
  </svg>
);

const Arrow = ({ label, dir }) => {
  const d = { up: "M2 8l4-4 4 4", down: "M2 4l4 4 4-4", left: "M8 2L4 6l4 4", right: "M4 2l4 4-4 4" }[dir];
  return (
    <button type="button" aria-label={label} className="flex h-4 w-4 shrink-0 items-center justify-center">
      <svg width="12" height="12" viewBox="0 0 12 12" fill="none" stroke="#5b5b5b" strokeWidth="2" aria-hidden="true"><path d={d} /></svg>
    </button>
  );
};

const NavBtn = ({ label, d }) => (
  <button type="button" aria-label={label} className="flex h-[15px] w-[14px] items-center justify-center border-r border-b border-[#9a9a9a] bg-[#efefef]">
    <svg width="10" height="10" viewBox="0 0 10 10" fill="#6d6d6d" stroke="#6d6d6d" aria-hidden="true"><path d={d} /></svg>
  </button>
);

const Tabs = () => (
  <div className="flex h-4 bg-[#efefef] pl-0.5">
    <NavBtn label="First" d="M1.500 1v8M7.500 1.500v7L4 5z" />
    <NavBtn label="Previous" d="M6.500 1.500v7L3 5z" />
    <NavBtn label="Next" d="M3.500 1.500v7L7 5z" />
    <NavBtn label="Last" d="M2.500 1.500v7L6 5zM8.500 1v8" />
    <button type="button" className={"h-[15px] w-11 bg-black text-center leading-[15px] text-white [clip-path:polygon(0_0,100%_0,88%_100%,12%_100%)] " + SERIF}>模型</button>
    <button type="button" className={"ml-1.5 leading-[15px] text-black " + SERIF}>Layout1</button>
    <svg width="19" height="14" viewBox="0 0 19 14" stroke="#555" fill="none" aria-hidden="true"><path d="M7 13L13 1M11 5l4 8" /></svg>
    <button type="button" className={"leading-[15px] text-black " + SERIF}>Layout2</button>
    <svg width="18" height="14" viewBox="0 0 18 14" stroke="#555" fill="none" aria-hidden="true"><path d="M6 13L12 1" /></svg>
    <div className="flex-1" />
    <div className="flex w-[653px] shrink-0">
      <div className="my-px w-[5px] border-l border-[#a5a5a5] bg-[#cdcdcd]" />
      <Arrow label="Scroll left" dir="left" />
      <div className="grow-[320]" />
      <div className="w-[17px] bg-[#cdcdcd]" />
      <div className="grow-[259]" />
      <Arrow label="Scroll right" dir="right" />
      <div className="w-[18px]" />
    </div>
  </div>
);

const Body = () => (
  <div className="flex flex-1 pr-[3px]">
    <main className="mb-1 flex flex-1 flex-col border-r border-white">
      <div className="flex flex-1 border-t-2 border-l-2 border-t-[#5a5a5e] border-l-[#8c8e95]">
        <div className="relative min-h-96 flex-1 overflow-hidden bg-black">
          <Drawing />
        </div>
        <div className="flex w-[18px] flex-col border-r border-[#dcdcdc] bg-[#efefef]">
          <Arrow label="Scroll up" dir="up" />
          <div className="grow-[473]" />
          <div className="h-[17px] bg-[#cdcdcd]" />
          <div className="grow-[284]" />
          <Arrow label="Scroll down" dir="down" />
        </div>
      </div>
      <Tabs />
    </main>
    <aside role="toolbar" aria-label="绘图次序" className="ml-1 flex w-[25px] flex-col items-center self-start border border-[#66686d] bg-[#ebebeb]">
      <div className="flex h-2 w-full items-center justify-center bg-[#a1a4ad]">
        <div className="h-1 w-4 bg-[conic-gradient(#2f3136_25%,#e4e4e4_0_50%,#0000_0)] bg-[size:2px_2px]" />
      </div>
      <Items list="order1 order2 order3 order4" />
    </aside>
  </div>
);

const CommandLine = () => (
  <section aria-label="命令行" className="flex h-[58px] bg-white font-['Liberation_Mono','Noto_Sans_CJK_SC',monospace] text-[16px] text-black">
    <div className="w-4 shrink-0 rounded-r-sm bg-[#a5a5a5] pt-1">
      <div className="ml-0.5 h-1 w-3 bg-[conic-gradient(#2f3136_25%,#e4e4e4_0_50%,#0000_0)] bg-[size:2px_2px]" />
    </div>
    <div className="flex flex-1 flex-col">
      <div className="flex h-10 justify-between border-b border-[#9b9b9b]">
        <div className="pl-[2px] font-light leading-4">
          <p>不能保证应用程序兼容性或此文件的完整性。</p>
          <p>命令<span className="text-[13px] text-[#333]">: COMMANDLINE</span></p>
        </div>
        <div className="flex w-4 flex-col justify-between bg-[#efefef]">
          <Arrow label="History up" dir="up" />
          <Arrow label="History down" dir="down" />
        </div>
      </div>
      <div className="flex flex-1 items-center">
        <label htmlFor="cmd" className="pl-[2px] font-light leading-4">命令<span className="text-[13px]">:</span></label>
        <input id="cmd" className="h-4 min-w-0 flex-1 bg-transparent pl-2 text-[13px] outline-none" />
        <div className="relative flex h-[17px] w-[86px] items-center bg-[#efefef] pl-[3px]">
          <Arrow label="Command scroll left" dir="left" />
          <div className="h-4 w-[17px] bg-[#cdcdcd]" />
          <div className="w-[15px]" />
          <Arrow label="Command scroll right" dir="right" />
          <span className="absolute left-2 font-['Liberation_Sans',sans-serif] text-[13px] font-bold leading-4 text-white/70">.COM</span>
        </div>
      </div>
    </div>
  </section>
);

const SBtn = ({ name, on = false }) => (
  <button
    type="button"
    aria-label={name}
    aria-pressed={on}
    className={"flex w-[22px] shrink-0 items-center justify-center border-l border-[#6c6c6c] bg-linear-to-b " + (on ? "from-[#eaf7fa] via-[#b9dfe8] to-[#9fd2df]" : "from-[#cbcbcb] to-[#a3a3a3]")}
  >
    <Art name={name} />
  </button>
);

const SText = ({ children, width, label }) => (
  <button type="button" aria-label={label} className={"flex shrink-0 items-center border-l border-[#6c6c6c] bg-linear-to-b from-[#cbcbcb] to-[#a3a3a3] whitespace-nowrap text-black " + width}>
    {children}
  </button>
);

const Down = () => (
  <svg width="8" height="5" viewBox="0 0 8 5" className="mb-1 shrink-0" aria-hidden="true"><path d="M0 0h8L4 4.500z" fill="#111" /></svg>
);

const StatusBar = () => (
  <footer className="flex h-[22px] border-t border-black bg-linear-to-b from-[#fafafc] to-[#c6c8d0] text-black">
    <div className={"flex w-[211px] items-center pl-3 pt-1 whitespace-pre " + MONO}>309.6797, 150.2119, 0.0000</div>
    <div className="flex border-r border-[#6c6c6c]">
      <SBtn name="snap" /><SBtn name="grid" /><SBtn name="ortho" /><SBtn name="polar" />
      <SBtn name="osnap" on /><SBtn name="otrack" on /><SBtn name="ducs" /><SBtn name="dyn" />
      <SBtn name="lwt" on /><SBtn name="qp" />
    </div>
    <div className="flex-1" />
    <div className="flex border-r border-[#6c6c6c]">
      <SText width="w-[30px] justify-center"><span className={UI}>模型</span></SText>
      <SBtn name="layoutA" /><SBtn name="layoutB" />
    </div>
    <div className="w-[17px]" />
    <div className="flex border-r border-[#6c6c6c]">
      <SBtn name="pan" /><SBtn name="zoomrt" /><SBtn name="steer" /><SBtn name="motion" />
    </div>
    <div className="w-[17px]" />
    <div className="flex border-r border-[#6c6c6c]">
      <SText width="w-[54px] justify-between pr-1" label="注释比例"><Art name="anno" /><span className={MONO}>1:1</span><Down /></SText>
      <SBtn name="annovis" /><SBtn name="annoauto" />
    </div>
    <div className="w-[5px]" />
    <div className="flex border-r border-[#6c6c6c]">
      <SText width="w-[108px] justify-between pr-1" label="切换工作空间">
        <Art name="gear" />
        <span className={"flex items-center gap-1 " + MONO}>AutoCAD <span className="text-[12px]">经典</span></span>
        <Down />
      </SText>
      <SBtn name="unlock" />
      <button type="button" aria-label="tray" className="flex w-8 items-center justify-center border-2 border-white border-l-[#6c6c6c] bg-[#b5b5b5]"><Art name="tray" /></button>
      <SText width="w-[11px] justify-center" label="状态栏菜单"><svg width="6" height="4" viewBox="0 0 6 4" aria-hidden="true"><path d="M0 0h6L3 4z" fill="#111" /></svg></SText>
      <SBtn name="clean" />
    </div>
    <div className="w-px" />
  </footer>
);

const Watermark = () => (
  <svg width="72" height="82" viewBox="0 0 72 82" className="pointer-events-none absolute right-[211px] bottom-[13px]" aria-hidden="true">
    <g opacity=".82">
      <path d="M36 0L72 20V61L36 82 0 61V20z" fill="#8bd2f8" />
      <path d="M36 0L0 20v24q6-9 17-14l19-12z" fill="#b3e4fd" />
      <path d="M36 0l15 9q5 8 5 21L36 18q-12-5-24-5z" fill="#c3dce9" />
      <path d="M0 44q6-9 17-14v22q-1 10 3 21L0 61z" fill="#93d7fa" />
      <path d="M17 52l19 12q16 0 30-6l6-12v15L36 82l-16-9q-4-11-3-21z" fill="#5bc1f4" />
      <path d="M51 9l21 11v24q-4 7-16 9V30q0-13-5-21z" fill="#7bd0f9" />
      <path d="M36 18q-14-6-24-4M17 30Q4 36 0 45M17 52q-1 10 3 21M36 65q18-1 31-5M56 52q12-8 16-24M56 31q0-12-5-22" stroke="#fff" fill="none" />
      <path d="M36 18l20 12v23L36 65 17 53V30z" fill="#fff" />
      <path d="M36 22l16 9-16 10-16-10z" fill="#a9ddf9" />
      <path d="M20 31l16 10v18L20 50z" fill="#66bcee" />
      <path d="M52 31L36 41v18l16-9z" fill="#5fb8ee" />
    </g>
  </svg>
);

export default function App() {
  return (
    <div className="relative flex min-h-screen flex-col overflow-hidden bg-[#adb0b9]">
      <Header />
      <Toolbars />
      <Body />
      <CommandLine />
      <StatusBar />
      <Watermark />
      <div className="absolute top-[99px] right-[-28px] flex size-12 items-center rounded-full border-2 border-[#e8e8e8] bg-radial-[at_50%_20%] from-[#7fe08c] to-[#35b74c] pl-1 shadow-md ring-1 ring-[#777]">
        <span className="font-['DejaVu_Sans',sans-serif] text-[10px] font-bold text-white">37</span>
      </div>
    </div>
  );
}
